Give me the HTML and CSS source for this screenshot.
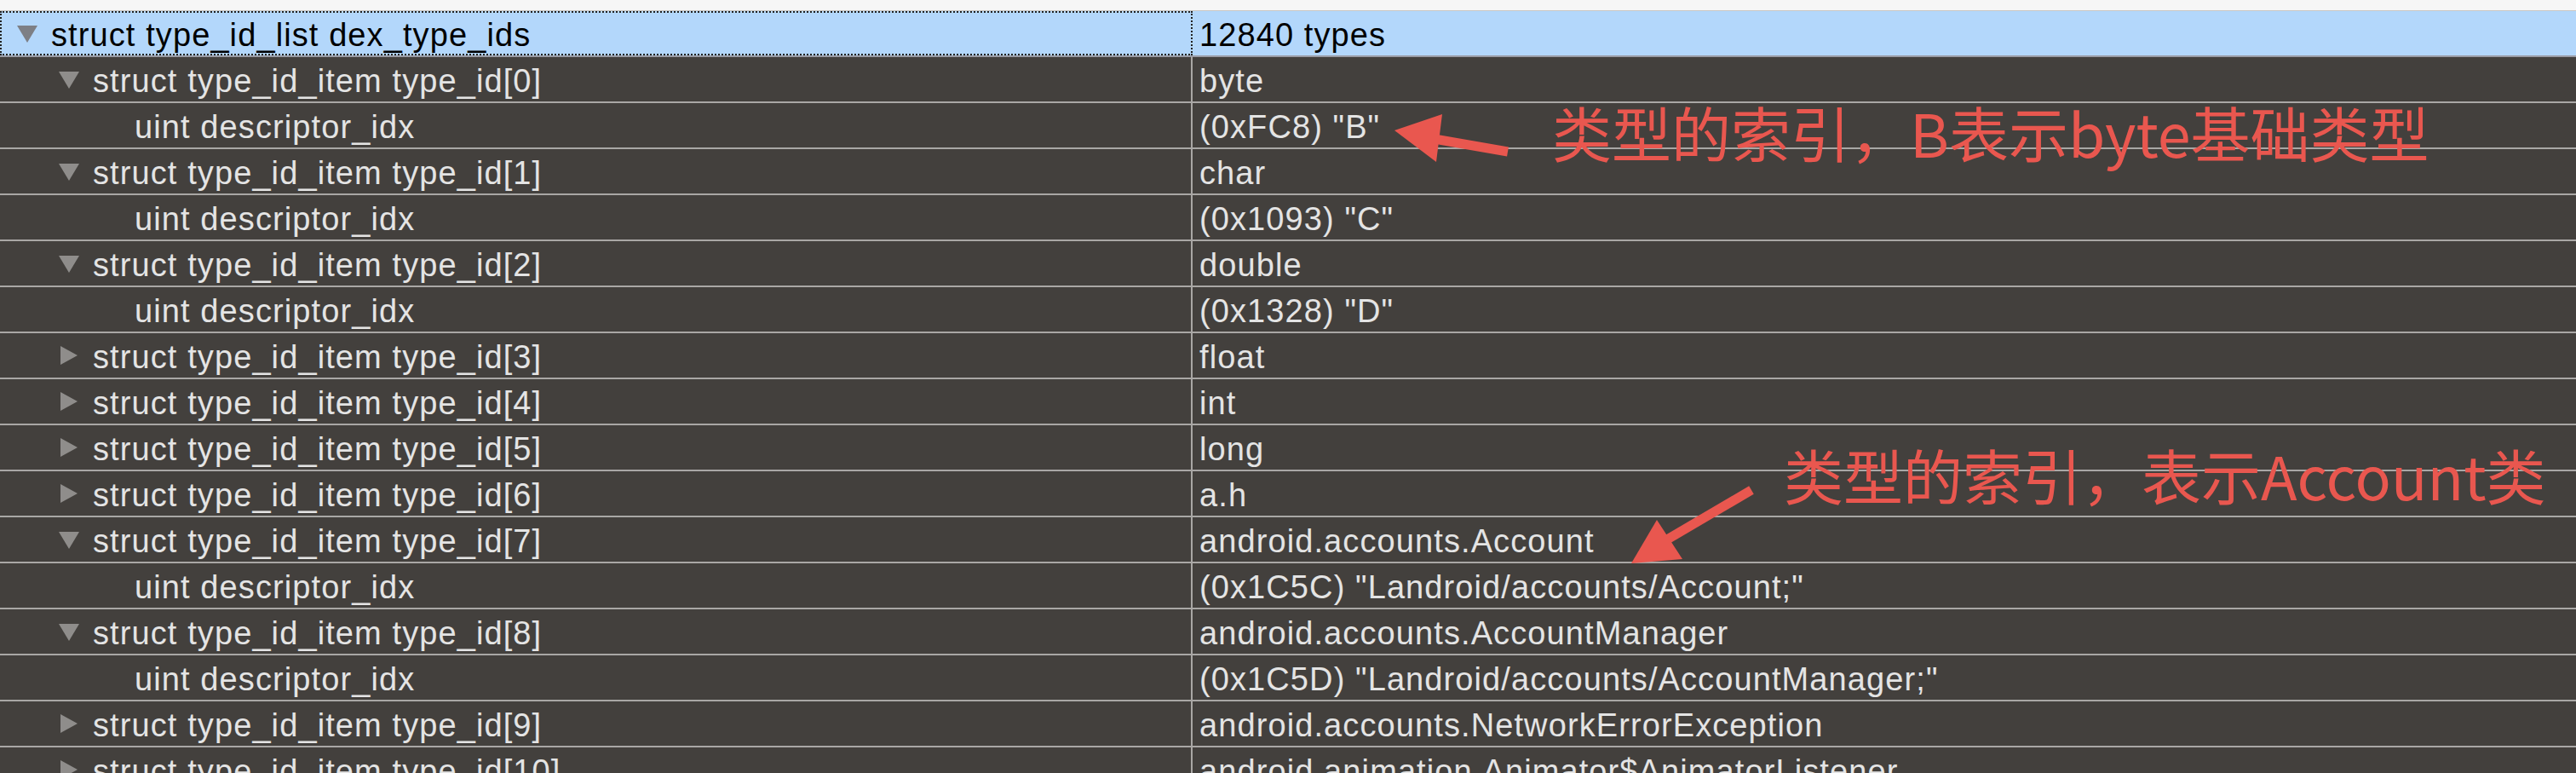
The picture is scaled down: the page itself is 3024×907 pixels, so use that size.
FILE: index.html
```html
<!DOCTYPE html>
<html lang="zh-CN">
<head>
    <meta charset="UTF-8">
    <title>dex_type_ids</title>
    <link rel="stylesheet" href="styles.css">
</head>
<body>
    <div class="topbar"></div>

    <div class="outline">
        <div class="row selected">
            <div class="cell name lvl0 focus"><svg class="tri" viewBox="0 0 24 24"><polygon points="0,3 24,3 12,23"/></svg>struct type_id_list dex_type_ids</div>
            <div class="cell value">12840 types</div>
        </div>
        <div class="row">
            <div class="cell name lvl1"><svg class="tri" viewBox="0 0 24 24"><polygon points="0,3 24,3 12,23"/></svg>struct type_id_item type_id[0]</div>
            <div class="cell value">byte</div>
        </div>
        <div class="row">
            <div class="cell name lvl2">uint descriptor_idx</div>
            <div class="cell value">(0xFC8) "B"</div>
        </div>
        <div class="row">
            <div class="cell name lvl1"><svg class="tri" viewBox="0 0 24 24"><polygon points="0,3 24,3 12,23"/></svg>struct type_id_item type_id[1]</div>
            <div class="cell value">char</div>
        </div>
        <div class="row">
            <div class="cell name lvl2">uint descriptor_idx</div>
            <div class="cell value">(0x1093) "C"</div>
        </div>
        <div class="row">
            <div class="cell name lvl1"><svg class="tri" viewBox="0 0 24 24"><polygon points="0,3 24,3 12,23"/></svg>struct type_id_item type_id[2]</div>
            <div class="cell value">double</div>
        </div>
        <div class="row">
            <div class="cell name lvl2">uint descriptor_idx</div>
            <div class="cell value">(0x1328) "D"</div>
        </div>
        <div class="row">
            <div class="cell name lvl1"><svg class="tri" viewBox="0 0 24 24"><polygon points="2,1 22,12 2,23"/></svg>struct type_id_item type_id[3]</div>
            <div class="cell value">float</div>
        </div>
        <div class="row">
            <div class="cell name lvl1"><svg class="tri" viewBox="0 0 24 24"><polygon points="2,1 22,12 2,23"/></svg>struct type_id_item type_id[4]</div>
            <div class="cell value">int</div>
        </div>
        <div class="row">
            <div class="cell name lvl1"><svg class="tri" viewBox="0 0 24 24"><polygon points="2,1 22,12 2,23"/></svg>struct type_id_item type_id[5]</div>
            <div class="cell value">long</div>
        </div>
        <div class="row">
            <div class="cell name lvl1"><svg class="tri" viewBox="0 0 24 24"><polygon points="2,1 22,12 2,23"/></svg>struct type_id_item type_id[6]</div>
            <div class="cell value">a.h</div>
        </div>
        <div class="row">
            <div class="cell name lvl1"><svg class="tri" viewBox="0 0 24 24"><polygon points="0,3 24,3 12,23"/></svg>struct type_id_item type_id[7]</div>
            <div class="cell value">android.accounts.Account</div>
        </div>
        <div class="row">
            <div class="cell name lvl2">uint descriptor_idx</div>
            <div class="cell value">(0x1C5C) "Landroid/accounts/Account;"</div>
        </div>
        <div class="row">
            <div class="cell name lvl1"><svg class="tri" viewBox="0 0 24 24"><polygon points="0,3 24,3 12,23"/></svg>struct type_id_item type_id[8]</div>
            <div class="cell value">android.accounts.AccountManager</div>
        </div>
        <div class="row">
            <div class="cell name lvl2">uint descriptor_idx</div>
            <div class="cell value">(0x1C5D) "Landroid/accounts/AccountManager;"</div>
        </div>
        <div class="row">
            <div class="cell name lvl1"><svg class="tri" viewBox="0 0 24 24"><polygon points="2,1 22,12 2,23"/></svg>struct type_id_item type_id[9]</div>
            <div class="cell value">android.accounts.NetworkErrorException</div>
        </div>
        <div class="row">
            <div class="cell name lvl1"><svg class="tri" viewBox="0 0 24 24"><polygon points="2,1 22,12 2,23"/></svg>struct type_id_item type_id[10]</div>
            <div class="cell value">android.animation.Animator$AnimatorListener</div>
        </div>
    </div>

    <!-- annotations drawn over the table -->
    <svg class="arrows" width="3024" height="907" viewBox="0 0 3024 907">
        <line x1="1678" y1="162" x2="1770" y2="178"/>
        <polygon points="1637,153 1693,134 1686,190"/>
        <line x1="1952" y1="636" x2="2056" y2="575"/>
        <polygon points="1915,661 1945,610 1975,656"/>
    </svg>
    <div class="note note-byte">类型的索引，B表示byte基础类型</div>
    <div class="note note-account">类型的索引，表示Account类</div>
</body>
</html>
```

FILE: styles.css
```css
body {
    margin: 0;
    background: #43403d;
    font-family: "Liberation Sans", Arial, sans-serif;
    overflow: hidden;
    position: relative;
    height: 907px;
}
.topbar {
    height: 12px;
    background: #f6f6f6;
    border-bottom: 1px solid #c9c7c5;
}
.row {
    display: flex;
    height: 52px;
    border-bottom: 2px solid #a9a7a5;
    color: #e4e4e4;
    font-size: 38px;
    letter-spacing: 1.1px;
    white-space: nowrap;
}
.row.selected {
    background: #b3d7fb;
    color: #000;
    border-bottom-color: #9a9ca6;
}
.cell {
    display: flex;
    align-items: center;
    box-sizing: border-box;
    padding-top: 4px;
    height: 100%;
}
.name {
    width: 1400px;
    border-right: 2px solid #a9a7a5;
}
.selected .name {
    border-right-color: transparent;
}
.focus {
    outline: 2px dotted #222;
    outline-offset: -2px;
}
.value {
    flex: 1;
    padding-left: 8px;
}
.lvl0 { padding-left: 20px; }
.lvl1 { padding-left: 69px; }
.lvl2 { padding-left: 158px; }
.tri {
    width: 24px;
    height: 24px;
    margin-right: 16px;
    margin-top: -4px;
    flex: none;
    fill: #8f8d8b;
}
.selected .tri { fill: #7d7f85; }
.arrows {
    position: absolute;
    top: 0;
    left: 0;
    pointer-events: none;
}
.arrows line {
    stroke: #e9574f;
    stroke-width: 11;
}
.arrows polygon {
    fill: #e9574f;
}
.note {
    position: absolute;
    color: #e9574f;
    font-family: "Noto Sans CJK SC", sans-serif;
    font-size: 70px;
    line-height: 70px;
    white-space: nowrap;
}
.note-byte {
    left: 1822px;
    top: 120px;
}
.note-account {
    left: 2094px;
    top: 522px;
}
```
